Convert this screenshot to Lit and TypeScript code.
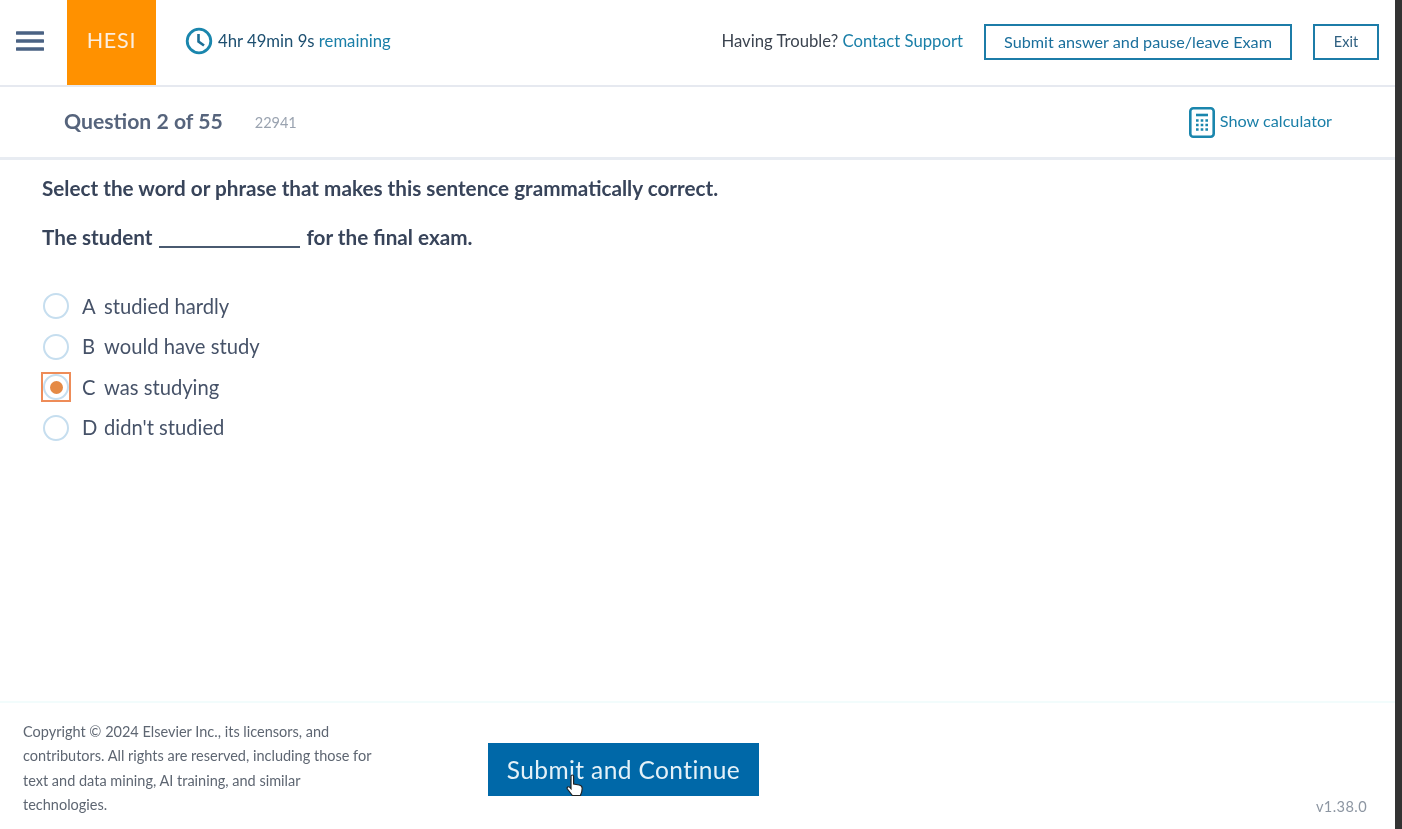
import { LitElement, html, css } from "lit";
import { customElement } from "lit/decorators.js";

const OPTIONS = [
  { key: "A", text: "studied hardly", selected: false },
  { key: "B", text: "would have study", selected: false },
  { key: "C", text: "was studying", selected: true },
  { key: "D", text: "didn't studied", selected: false },
];

@customElement("app-root")
export class AppRoot extends LitElement {
  static styles = css`
    :host {
      display: block;
      height: 829px;
      width: 1402px;
      overflow: hidden;
      background: #333;
      font-family: "Lato", "Noto Sans", sans-serif;
      color: #2e3a4c;
    }
    .page {
      width: 1395px;
      height: 829px;
      background: #fff;
      display: flex;
      flex-direction: column;
      filter: blur(0.6px);
    }
    .header {
      height: 87px;
      flex: none;
      box-sizing: border-box;
      display: flex;
      align-items: center;
      border-bottom: 2px solid #e6e9f0;
    }
    .header > * {
      margin-bottom: 3px;
    }
    .menu {
      width: 67px;
      flex: none;
      padding-left: 16px;
      box-sizing: border-box;
      display: flex;
    }
    .logo {
      width: 89px;
      height: 85px;
      flex: none;
      background: #ff9100;
      color: #fbeee0;
      font-size: 21.5px;
      display: flex;
      align-items: center;
      justify-content: center;
      letter-spacing: 0.8px;
      padding-bottom: 5px;
      box-sizing: border-box;
      margin-bottom: 0;
    }
    .timer {
      display: flex;
      align-items: center;
      gap: 5px;
      margin-left: 29px;
      font-size: 16.7px;
      color: #1a7fa8;
    }
    .timer b {
      font-weight: 400;
      color: #1d4f70;
    }
    .spacer {
      flex: 1;
    }
    .trouble {
      font-size: 16.7px;
      color: #3c4450;
    }
    .trouble a {
      color: #1a7fa8;
    }
    .header .btn {
      margin-bottom: 2px;
    }
    .btn {
      border: 2px solid #1c7ca8;
      height: 36px;
      box-sizing: border-box;
      display: flex;
      align-items: center;
      justify-content: center;
      padding-bottom: 1px;
      font-size: 16.2px;
      color: #1a6f9c;
      background: #fff;
    }
    .btn.leave {
      width: 308px;
      margin-left: 21px;
    }
    .btn.exit {
      width: 66px;
      margin-left: 21px;
      margin-right: 16px;
      font-size: 14.5px;
      color: #2e5f80;
    }
    .subbar {
      height: 73px;
      flex: none;
      box-sizing: border-box;
      display: flex;
      align-items: center;
      padding: 0 63px 0 64px;
      border-bottom: 3px solid #e8ecf2;
    }
    .qnum {
      font-size: 21.2px;
      font-weight: 700;
      color: #56647c;
      padding-bottom: 2px;
    }
    .qid {
      font-size: 14.5px;
      color: #9aa3b0;
      margin-left: 32px;
    }
    .calc {
      display: flex;
      align-items: center;
      gap: 5px;
      font-size: 16.2px;
      color: #1a7fa8;
    }
    .calc span {
      padding-bottom: 4px;
    }
    .content {
      flex: 1;
      padding: 15px 0 0 42px;
      font-size: 20.7px;
    }
    .prompt {
      font-weight: 700;
      color: #38445a;
      line-height: 26px;
    }
    .stem {
      font-weight: 700;
      color: #38445a;
      line-height: 26px;
      margin-top: 23px;
    }
    .blank {
      display: inline-block;
      width: 141px;
      border-bottom: 2px solid #4a5a70;
      margin: 0 1px 0 7px;
      height: 17px;
      vertical-align: -3px;
    }
    .options {
      margin-top: 41px;
      margin-left: -1px;
      display: flex;
      flex-direction: column;
      gap: 10.5px;
    }
    .option {
      height: 30px;
      display: flex;
      align-items: center;
      font-size: 20.2px;
      color: #465268;
    }
    .option .text,
    .option .key {
      padding-bottom: 1px;
    }
    .radio-box {
      width: 30px;
      height: 30px;
      box-sizing: border-box;
      flex: none;
      display: flex;
      align-items: center;
      justify-content: center;
      margin-right: 11px;
      border: 2px solid transparent;
    }
    .radio-box.selected {
      border-color: #ee8c58;
    }
    .radio {
      width: 26px;
      height: 26px;
      box-sizing: border-box;
      border-radius: 50%;
      border: 2px solid #c6deef;
      display: flex;
      align-items: center;
      justify-content: center;
    }
    .dot {
      width: 13px;
      height: 13px;
      border-radius: 50%;
      background: #e58a45;
    }
    .key {
      width: 22px;
      flex: none;
    }
    .footer {
      height: 128px;
      flex: none;
      box-sizing: border-box;
      border-top: 2px solid #f2fcfc;
      display: flex;
      position: relative;
      padding-left: 23px;
    }
    .copy {
      width: 352px;
      flex: none;
      font-size: 14.5px;
      line-height: 24.3px;
      color: #5e6672;
      padding-top: 17px;
    }
    .submit {
      width: 271px;
      height: 53px;
      flex: none;
      margin: 40px 0 0 113px;
      background: #0068a8;
      color: #e4f1f8;
      font-size: 24.5px;
      letter-spacing: 0.4px;
      display: flex;
      align-items: center;
      justify-content: center;
    }
    .version {
      position: absolute;
      right: 28px;
      bottom: 14px;
      font-size: 14.6px;
      color: #8d96a2;
      letter-spacing: 0.4px;
    }
    .cursor {
      position: absolute;
      left: 566px;
      top: 71px;
    }
  `;

  render() {
    return html`
      <div class="page">
        <header class="header">
          <div class="menu">
            <svg width="28" height="26" viewBox="0 0 28 26">
              <path d="M1 5h26M1 13h26M1 21h26" stroke="#4a6283" stroke-width="3.6" stroke-linecap="round" fill="none" />
            </svg>
          </div>
          <div class="logo">HESI</div>
          <div class="timer">
            <svg width="28" height="28" viewBox="0 0 28 28">
              <circle cx="14" cy="14" r="11.8" stroke="#1a86ad" stroke-width="2.8" fill="none" />
              <path d="M13.5 7v7.5l5.5 4" stroke="#1d6f96" stroke-width="2.6" fill="none" />
            </svg>
            <span><b>4hr 49min 9s</b> remaining</span>
          </div>
          <div class="spacer"></div>
          <div class="trouble">Having Trouble? <a>Contact Support</a></div>
          <div class="btn leave">Submit answer and pause/leave Exam</div>
          <div class="btn exit">Exit</div>
        </header>
        <div class="subbar">
          <span class="qnum">Question 2 of 55</span>
          <span class="qid">22941</span>
          <div class="spacer"></div>
          <div class="calc">
            <svg width="26" height="31" viewBox="0 0 26 31">
              <rect x="1.3" y="1.3" width="23.4" height="28.4" rx="3" stroke="#1a86ad" stroke-width="2.6" fill="#fff" />
              <path d="M7 8h12" stroke="#1a86ad" stroke-width="2.6" />
              <path d="M7 13.5h12M7 18h12M7 22.5h12" stroke="#1a86ad" stroke-width="2.4" stroke-dasharray="2.6 2.1" fill="none" />
            </svg>
            <span>Show calculator</span>
          </div>
        </div>
        <main class="content">
          <div class="prompt">Select the word or phrase that makes this sentence grammatically correct.</div>
          <div class="stem">The student<span class="blank"></span> for the final exam.</div>
          <div class="options">
            ${OPTIONS.map(
              (o) => html`
                <div class="option">
                  <span class="radio-box ${o.selected ? "selected" : ""}">
                    <span class="radio">${o.selected ? html`<span class="dot"></span>` : ""}</span>
                  </span>
                  <span class="key">${o.key}</span>
                  <span class="text">${o.text}</span>
                </div>
              `
            )}
          </div>
        </main>
        <footer class="footer">
          <div class="copy">
            Copyright © 2024 Elsevier Inc., its licensors, and contributors. All rights are reserved, including those for text and data mining, AI training, and similar technologies.
          </div>
          <div class="submit">Submit and Continue</div>
          <span class="version">v1.38.0</span>
          <svg class="cursor" width="18" height="26" viewBox="0 0 18 26">
            <path d="M5 2.2c0-1.6 2.6-1.6 2.6 0V10l5.6 1c2 .4 3 1.4 3 3.2 0 3-.8 5-1.8 7.3H6.4L1.4 15c-1-1.6 1-3 2.4-1.7L5 14.6z" fill="#fff" stroke="#222" stroke-width="1.2" />
          </svg>
        </footer>
      </div>
    `;
  }
}
